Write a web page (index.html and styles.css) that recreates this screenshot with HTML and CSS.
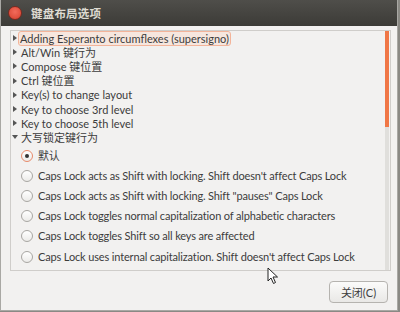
FILE: index.html
```html
<!DOCTYPE html>
<html lang="zh-CN">
<head>
    <meta charset="UTF-8">
    <title>键盘布局选项</title>
    <link rel="stylesheet" href="styles.css">
</head>
<body>
    <div class="window">
        <div class="title-bar">
            <span class="close-dot"></span>
            <span class="title">键盘布局选项</span>
        </div>

        <div class="content">
            <div class="tree-frame">
                <div class="tree">
                    <div class="row"><span class="arrow"></span><span class="label focused">Adding Esperanto circumflexes (supersigno)</span></div>
                    <div class="row"><span class="arrow"></span><span class="label">Alt/Win 键行为</span></div>
                    <div class="row"><span class="arrow"></span><span class="label">Compose 键位置</span></div>
                    <div class="row"><span class="arrow"></span><span class="label">Ctrl 键位置</span></div>
                    <div class="row"><span class="arrow"></span><span class="label">Key(s) to change layout</span></div>
                    <div class="row"><span class="arrow"></span><span class="label">Key to choose 3rd level</span></div>
                    <div class="row"><span class="arrow"></span><span class="label">Key to choose 5th level</span></div>
                    <div class="row"><span class="arrow open"></span><span class="label">大写锁定键行为</span></div>

                    <div class="options">
                        <div class="option"><span class="radio checked"></span>默认</div>
                        <div class="option"><span class="radio"></span>Caps Lock acts as Shift with locking. Shift doesn't affect Caps Lock</div>
                        <div class="option"><span class="radio"></span>Caps Lock acts as Shift with locking. Shift "pauses" Caps Lock</div>
                        <div class="option"><span class="radio"></span>Caps Lock toggles normal capitalization of alphabetic characters</div>
                        <div class="option"><span class="radio"></span>Caps Lock toggles Shift so all keys are affected</div>
                        <div class="option"><span class="radio"></span>Caps Lock uses internal capitalization. Shift doesn't affect Caps Lock</div>
                    </div>
                </div>
                <div class="scrollbar"><div class="thumb"></div></div>
            </div>

            <div class="actions">
                <button class="close-btn">关闭(C)</button>
            </div>
        </div>

        <svg class="cursor" width="12" height="18" viewBox="0 0 12 18">
            <path d="M1 1 L1 14 L4 11 L6.5 16.5 L8.5 15.5 L6 10 L10.5 10 Z" fill="#fff" stroke="#222" stroke-width="1"/>
        </svg>
    </div>
</body>
</html>
```

FILE: styles.css
```css
:root {
    --bg-color: #f2f1f0;
    --title-color: #3c3b37;
    --text-color: #3c3c3c;
    --border-color: #cfcdca;
    --accent-color: #f07746;
}

* {
    margin: 0;
    padding: 0;
    box-sizing: border-box;
}

body {
    width: 400px;
    height: 312px;
    overflow: hidden;
    font-family: Lato, "Noto Sans CJK SC", sans-serif;
    font-size: 11px;
    color: var(--text-color);
    background: #8a8984;
}

.window {
    position: relative;
    width: 398px;
    height: 311px;
    background: var(--bg-color);
    border-left: 1px solid #a9a8a4;
    border-right: 1px solid #a9a8a4;
    border-bottom: 1px solid #a9a8a4;
    display: flex;
    flex-direction: column;
}

/* title bar */
.title-bar {
    height: 26px;
    background: linear-gradient(#4f4e4a, #3c3b37);
    display: flex;
    align-items: center;
    padding-left: 7px;
    gap: 9px;
}

.close-dot {
    width: 14px;
    height: 14px;
    border-radius: 50%;
    background: radial-gradient(circle at 50% 40%, #f26b5b, #d6402e);
    border: 1px solid #7a2a20;
}

.title {
    color: #dfdbd2;
    font-weight: bold;
    font-size: 11.5px;
    letter-spacing: 0.2px;
}

.content {
    flex: 1;
    padding: 4px 6px 0 9px;
    display: flex;
    flex-direction: column;
}

.tree-frame {
    height: 241px;
    border: 1px solid var(--border-color);
    display: flex;
}

.tree {
    flex: 1;
    overflow: hidden;
}

.row {
    height: 14.2px;
    line-height: 14px;
    display: flex;
    align-items: center;
    white-space: nowrap;
}

.arrow {
    flex-shrink: 0;
    width: 0;
    height: 0;
    margin: 0 3px 0 2px;
    border-top: 3px solid transparent;
    border-bottom: 3px solid transparent;
    border-left: 4px solid #555;
}

.arrow.open {
    margin: 0 2px 0 1px;
    border-left: 3px solid transparent;
    border-right: 3px solid transparent;
    border-top: 4px solid #555;
    border-bottom: none;
}

.label {
    padding: 0 1px;
    line-height: 13px;
}

.label.focused {
    border: 1px solid #f3b49a;
    border-radius: 3px;
    background: #f6e6de;
    padding: 0 1px;
    margin-left: -2px;
}

.options {
    padding-top: 1px;
}

.option {
    height: 20.2px;
    line-height: 16px;
    letter-spacing: -0.15px;
    display: flex;
    align-items: center;
    white-space: nowrap;
    padding-left: 10px;
}

.radio {
    flex-shrink: 0;
    width: 12px;
    height: 12px;
    border-radius: 50%;
    border: 1px solid #a8a6a2;
    background: linear-gradient(#ffffff, #ecebe9);
    margin-right: 5px;
    display: flex;
    align-items: center;
    justify-content: center;
}

.radio.checked {
    border-color: #e88a6a;
}

.radio.checked::after {
    content: "";
    width: 4px;
    height: 4px;
    border-radius: 50%;
    background: #333;
}

.scrollbar {
    flex-shrink: 0;
    width: 4px;
    margin-right: 1px;
    background: #e0dfdc;
}

.thumb {
    height: 96px;
    background: var(--accent-color);
}

.actions {
    display: flex;
    justify-content: flex-end;
    padding-top: 10px;
    padding-right: 3px;
}

.close-btn {
    width: 59px;
    height: 22px;
    font-family: Lato, "Noto Sans CJK SC", sans-serif;
    font-size: 11px;
    color: var(--text-color);
    border: 1px solid #b5b3af;
    border-radius: 4px;
    background: linear-gradient(#fbfbfa, #e9e8e6);
}

.cursor {
    position: absolute;
    left: 266px;
    top: 267px;
}
```
